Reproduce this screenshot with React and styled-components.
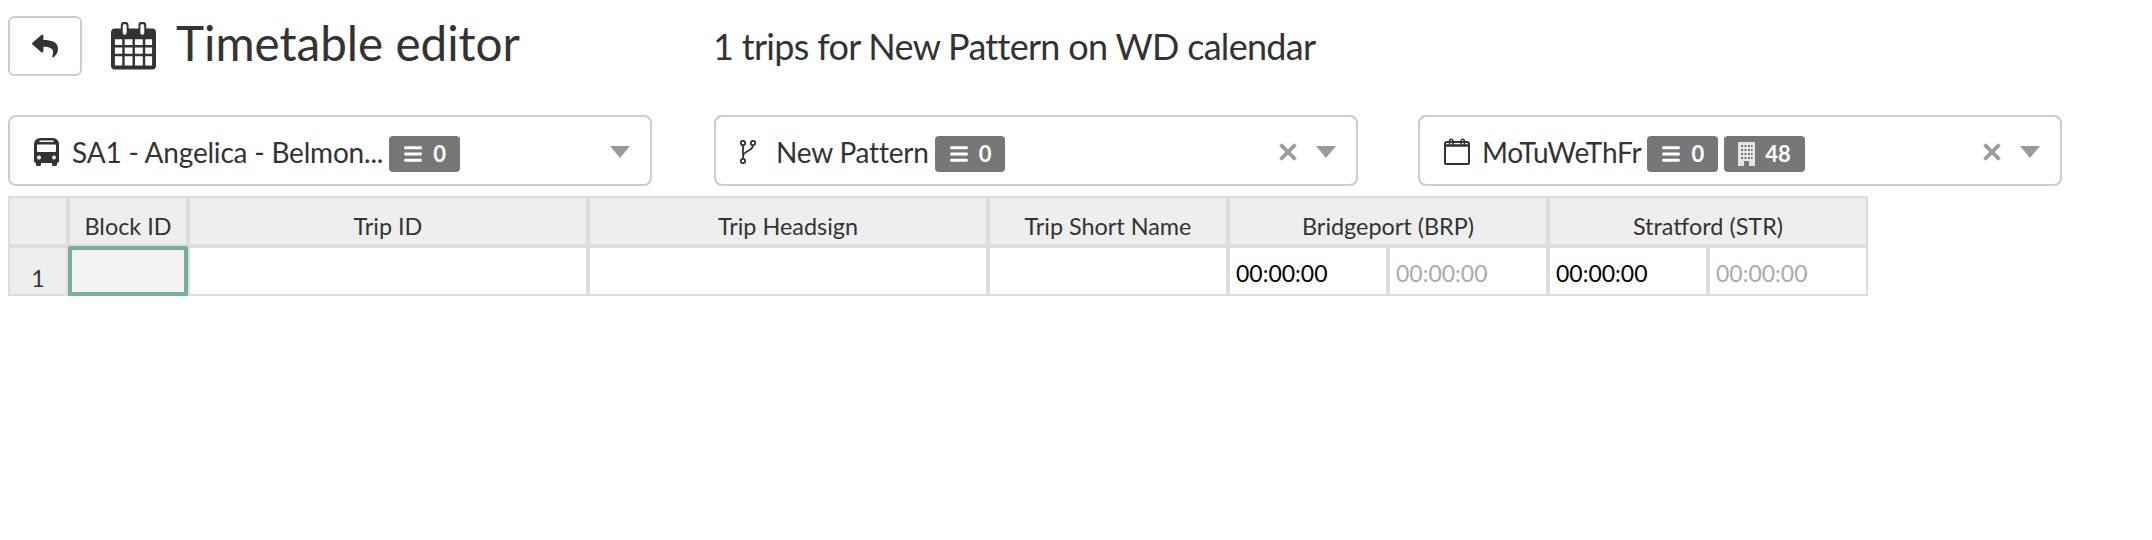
import React from "react";
import styled, { createGlobalStyle } from "styled-components";
import { FaReply, FaBars } from "react-icons/fa";

const GlobalStyle = createGlobalStyle`
  body {
    margin: 0;
    background: #fff;
    color: #333;
    font-family: Lato, "Noto Sans", sans-serif;
  }
`;

const Page = styled.div`
  padding: 16px 8px 0;
`;

const Header = styled.div`
  display: grid;
  grid-template-columns: 705px 1fr;
  align-items: center;
  height: 60px;
`;

const TitleGroup = styled.div`
  display: flex;
  align-items: center;
`;

const BackButton = styled.button`
  width: 74px;
  height: 60px;
  padding: 0;
  display: flex;
  align-items: center;
  justify-content: center;
  background: #fff;
  color: #333;
  border: 2px solid #ccc;
  border-radius: 6px;
  font-size: 26px;
`;

const Title = styled.h1`
  margin: 0 0 0 29px;
  display: flex;
  align-items: center;
  gap: 20px;
  font-size: 47.6px;
  font-weight: 400;
`;

const TitleText = styled.span`
  margin-bottom: 6px;
  line-height: 48px;
`;

const SubTitle = styled.h2`
  margin: 0;
  font-size: 36px;
  font-weight: 400;
  line-height: 60px;
  letter-spacing: -0.7px;
`;

const Selects = styled.div`
  margin-top: 39px;
  display: grid;
  grid-template-columns: 706px 704px 644px;
`;

const Select = styled.div`
  width: 644px;
  height: 71px;
  box-sizing: border-box;
  padding: 2px 20px 0 24px;
  display: flex;
  align-items: center;
  border: 2px solid #ccc;
  border-radius: 8px;
  font-size: 28px;
  letter-spacing: -0.2px;
`;

const SelectLabel = styled.span`
  margin-left: ${(p) => p.$gap}px;
  white-space: nowrap;
`;

const Badge = styled.span`
  margin: 4px 0 0 6px;
  height: 36px;
  padding: 0 14px;
  display: flex;
  align-items: center;
  gap: 10px;
  background: #777;
  color: #fff;
  border-radius: 4px;
  font-size: 22px;
  font-weight: 700;
  letter-spacing: 0;
`;

const SelectEnd = styled.div`
  margin-left: auto;
  display: flex;
  align-items: center;
  gap: 19px;
`;

const Caret = styled.span`
  width: 0;
  height: 0;
  border-style: solid;
  border-width: 12px 10px 0;
  border-color: #999 transparent transparent;
`;

const Table = styled.div`
  margin-top: 10px;
  width: 1860px;
  display: grid;
  grid-template-columns: 60px 120px 400px 400px 240px repeat(4, 160px);
  grid-template-rows: 50px 50px;
`;

const HeaderCell = styled.div`
  grid-column: span ${(p) => p.$span || 1};
  box-sizing: border-box;
  padding-top: 14px;
  background: #eee;
  border: 2px solid #ddd;
  text-align: center;
  font-size: 23.4px;
  line-height: 28px;
`;

const RowNumber = styled(HeaderCell)`
  padding-top: 16px;
`;

const Cell = styled.div`
  box-sizing: border-box;
  padding: 0 6px;
  background: #fff;
  border: 2px solid #ddd;
  font-size: 23px;
  line-height: 50px;
  color: ${(p) => (p.$muted ? "#aaa" : "#000")};
`;

const ActiveCell = styled.div`
  background: #f3f3f3;
  border: 4px solid #79ae9f;
`;

function CalendarGrid() {
  return (
    <svg width="45" height="48" viewBox="0 0 46 48" fill="#333">
      <path d="M4 6h6V3a4 4 0 0 1 4-4 4 4 0 0 1 4 4v3h10V3a4 4 0 0 1 4-4 4 4 0 0 1 4 4v3h6a4 4 0 0 1 4 4v34a4 4 0 0 1-4 4H4a4 4 0 0 1-4-4V10a4 4 0 0 1 4-4z" />
      <rect x="12" y="1.500" width="4" height="11" rx="2" fill="#fff" />
      <rect x="30" y="1.500" width="4" height="11" rx="2" fill="#fff" />
      <path
        fill="#fff"
        d="M4 17h7.500v6H4zM14 17h8v6h-8zM24.500 17h8v6h-8zM35 17h7v6h-7zM4 25.500h7.500v6.500H4zM14 25.500h8v6.500h-8zM24.500 25.500h8v6.500h-8zM35 25.500h7v6.500h-7zM4 34.500h7.500V44H4zM14 34.500h8V44h-8zM24.500 34.500h8V44h-8zM35 34.500h7V44h-7z"
      />
    </svg>
  );
}

function BusIcon() {
  return (
    <svg width="25" height="28" viewBox="0 0 25 28" fill="#333">
      <path d="M6 0h13a6 6 0 0 1 6 6v17a2 2 0 0 1-2 2v1.500a1.500 1.500 0 0 1-1.500 1.500h-2a1.500 1.500 0 0 1-1.500-1.500V25H7v1.500A1.500 1.500 0 0 1 5.500 28h-2A1.500 1.500 0 0 1 2 26.500V25a2 2 0 0 1-2-2V6a6 6 0 0 1 6-6z" />
      <path fill="#fff" d="M5.500 2.500h14v1.500h-14zM4 6.500h17a1 1 0 0 1 1 1V13a1 1 0 0 1-1 1H4a1 1 0 0 1-1-1V7.500a1 1 0 0 1 1-1z" />
      <circle cx="5" cy="19.500" r="2" fill="#fff" />
      <circle cx="20" cy="19.500" r="2" fill="#fff" />
    </svg>
  );
}

function BranchIcon() {
  return (
    <svg width="16" height="24" viewBox="0 0 16 24" fill="none" stroke="#333" strokeWidth="1.800">
      <circle cx="3" cy="3" r="2.200" />
      <circle cx="13" cy="3" r="2.200" />
      <circle cx="3" cy="21" r="2.200" />
      <path d="M3 5.200v13.600M13 5.200c0 5.800-10 5.800-10 11" />
    </svg>
  );
}

function CalendarOutline() {
  return (
    <svg width="26" height="27" viewBox="0 0 26 27" fill="none" stroke="#333" strokeWidth="2">
      <path d="M3 4h20a2 2 0 0 1 2 2v19a1 1 0 0 1-1 1H2a1 1 0 0 1-1-1V6a2 2 0 0 1 2-2z" />
      <path d="M1 7.500h24" strokeWidth="2.500" />
      <path d="M5.500 7V3a1.700 1.700 0 0 1 3.400 0v4M17 7V3a1.700 1.700 0 0 1 3.400 0v4" strokeWidth="1.500" />
    </svg>
  );
}

function BuildingIcon() {
  return (
    <svg width="17" height="24" viewBox="0 0 17 24">
      <rect x="0" y="0" width="17" height="24" fill="#e4e4e4" />
      <path
        fill="#777"
        d="M3 3h2v2H3zM6.500 3h2v2h-2zM10 3h2v2h-2zM13 3h1.500v2H13zM3 7h2v2H3zM6.500 7h2v2h-2zM10 7h2v2h-2zM13 7h1.500v2H13zM3 11h2v2H3zM6.500 11h2v2h-2zM10 11h2v2h-2zM13 11h1.500v2H13zM3 15h2v2H3zM6.500 15h2v2h-2zM10 15h2v2h-2zM13 15h1.500v2H13zM6 19h5v5H6z"
      />
    </svg>
  );
}

function ClearIcon() {
  return (
    <svg width="18" height="18" viewBox="0 0 18 18" stroke="#999" strokeWidth="3.600">
      <path d="M1.500 1.500l15 15M16.500 1.500l-15 15" />
    </svg>
  );
}

const SelectEndControls = ({ clearable }) => (
  <SelectEnd>
    {clearable && <ClearIcon />}
    <Caret />
  </SelectEnd>
);

const TripCount = ({ value }) => (
  <Badge>
    <FaBars size={20} />
    {value}
  </Badge>
);

export default function App() {
  return (
    <Page>
      <GlobalStyle />
      <Header>
        <TitleGroup>
          <BackButton>
            <FaReply />
          </BackButton>
          <Title>
            <CalendarGrid />
            <TitleText>Timetable editor</TitleText>
          </Title>
        </TitleGroup>
        <SubTitle>1 trips for New Pattern on WD calendar</SubTitle>
      </Header>
      <Selects>
        <Select>
          <BusIcon />
          <SelectLabel $gap={13}>SA1 - Angelica - Belmon...</SelectLabel>
          <TripCount value={0} />
          <SelectEndControls />
        </Select>
        <Select>
          <BranchIcon />
          <SelectLabel $gap={20}>New Pattern</SelectLabel>
          <TripCount value={0} />
          <SelectEndControls clearable />
        </Select>
        <Select>
          <CalendarOutline />
          <SelectLabel $gap={12}>MoTuWeThFr</SelectLabel>
          <TripCount value={0} />
          <Badge>
            <BuildingIcon />
            48
          </Badge>
          <SelectEndControls clearable />
        </Select>
      </Selects>
      <Table>
        <HeaderCell />
        <HeaderCell>Block ID</HeaderCell>
        <HeaderCell>Trip ID</HeaderCell>
        <HeaderCell>Trip Headsign</HeaderCell>
        <HeaderCell>Trip Short Name</HeaderCell>
        <HeaderCell $span={2}>Bridgeport (BRP)</HeaderCell>
        <HeaderCell $span={2}>Stratford (STR)</HeaderCell>
        <RowNumber>1</RowNumber>
        <ActiveCell />
        <Cell />
        <Cell />
        <Cell />
        <Cell>00:00:00</Cell>
        <Cell $muted>00:00:00</Cell>
        <Cell>00:00:00</Cell>
        <Cell $muted>00:00:00</Cell>
      </Table>
    </Page>
  );
}
